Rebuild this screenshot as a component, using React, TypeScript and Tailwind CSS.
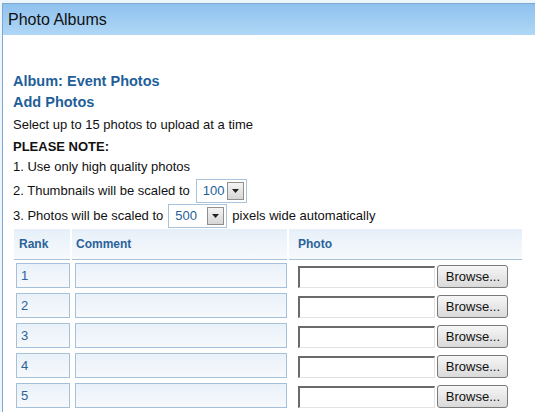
import React from 'react';

const SelectBox: React.FC<{ value: string; width: string }> = ({ value, width }) => (
  <div className={`inline-flex items-center justify-between h-[24px] border border-[#a9c3db] bg-white pl-[6px] pr-[2px] ${width}`}>
    <span className="text-[13px] text-[#245f98]">{value}</span>
    <span className="shrink-0 w-[17px] h-[18px] border border-[#8f8f8f] bg-gradient-to-b from-[#f4f4f4] to-[#d6d6d6] flex items-center justify-center">
      <svg width="7" height="4" viewBox="0 0 7 4">
        <path d="M0 0h7L3.5 4z" fill="#222" />
      </svg>
    </span>
  </div>
);

const Row: React.FC<{ rank: number }> = ({ rank }) => (
  <div className="grid grid-cols-[58px_217px_233px] h-[30px] items-start">
    <div className="pl-[2px]">
      <div className="w-[54px] h-[25px] border border-[#a5c1da] bg-gradient-to-b from-[#e9f1f9] to-[#f6f9fc] pl-[4px] text-[13px] leading-[23px] text-[#2d6297]">
        {rank}
      </div>
    </div>
    <div className="pl-[3px]">
      <div className="w-[212px] h-[25px] border border-[#a5c1da] bg-gradient-to-b from-[#e9f1f9] to-[#f6f9fc]" />
    </div>
    <div className="pl-[9px] flex items-end gap-[2px] h-[25px]">
      <div className="w-[137px] h-[22px] border-t-2 border-l-2 border-r border-b border-t-[#6a6a6a] border-l-[#6a6a6a] border-r-[#e3e3e3] border-b-[#e3e3e3] bg-white" />
      <button className="w-[71px] h-[23px] rounded-[3px] border border-[#7a7a7a] bg-gradient-to-b from-[#f6f6f6] to-[#dadada] text-[13px] text-[#111] text-right pr-[7px]">
        Browse...
      </button>
    </div>
  </div>
);

export default function App() {
  return (
    <div className="w-[535px] h-[412px] overflow-hidden bg-[#eef6fd] pt-[3px] pl-[2px] font-['Liberation_Sans',Arial,sans-serif] text-[#111]">
      <div className="h-[409px] border-l border-t border-[#7ea8d0] bg-white">
        <div className="h-[31px] bg-gradient-to-b from-[#8fc1ee] to-[#b0d7f6] pl-[5px] text-[16px] leading-[31px] text-[#111]">
          Photo Albums
        </div>
        <div className="pl-[10px] pt-[36px]">
          <div className="text-[14.5px] font-bold text-[#1f5f99] leading-[21px]">Album: Event Photos</div>
          <div className="text-[14.5px] font-bold text-[#1f5f99] leading-[21px]">Add Photos</div>
          <div className="text-[13px] leading-[22px] mt-[1px]">Select up to 15 photos to upload at a time</div>
          <div className="text-[13px] font-bold leading-[21px]">PLEASE NOTE:</div>
          <div className="text-[13px] leading-[20px]">1. Use only high quality photos</div>
          <div className="flex items-center gap-[6px] text-[13px] h-[25px] mt-[1px]">
            <span>2. Thumbnails will be scaled to</span>
            <SelectBox value="100" width="w-[51px]" />
          </div>
          <div className="flex items-center gap-[5px] text-[13px] h-[25px]">
            <span>3. Photos will be scaled to</span>
            <SelectBox value="500" width="w-[59px]" />
            <span>pixels wide automatically</span>
          </div>
          <div className="ml-[1px] w-[508px] mt-[1px]">
            <div className="grid grid-cols-[58px_217px_233px] h-[31px] border-b border-[#a9c2d8] bg-gradient-to-b from-[#e6eff8] to-[#f7fafd] text-[12px] font-bold text-[#2a6299]">
              <div className="pl-[5px] leading-[31px] border-r-2 border-white">Rank</div>
              <div className="pl-[4px] leading-[31px] border-r-2 border-white">Comment</div>
              <div className="pl-[9px] leading-[31px]">Photo</div>
            </div>
            <div className="pt-[3px]">
              {[1, 2, 3, 4, 5].map((r) => (
                <Row key={r} rank={r} />
              ))}
            </div>
          </div>
        </div>
      </div>
    </div>
  );
}
